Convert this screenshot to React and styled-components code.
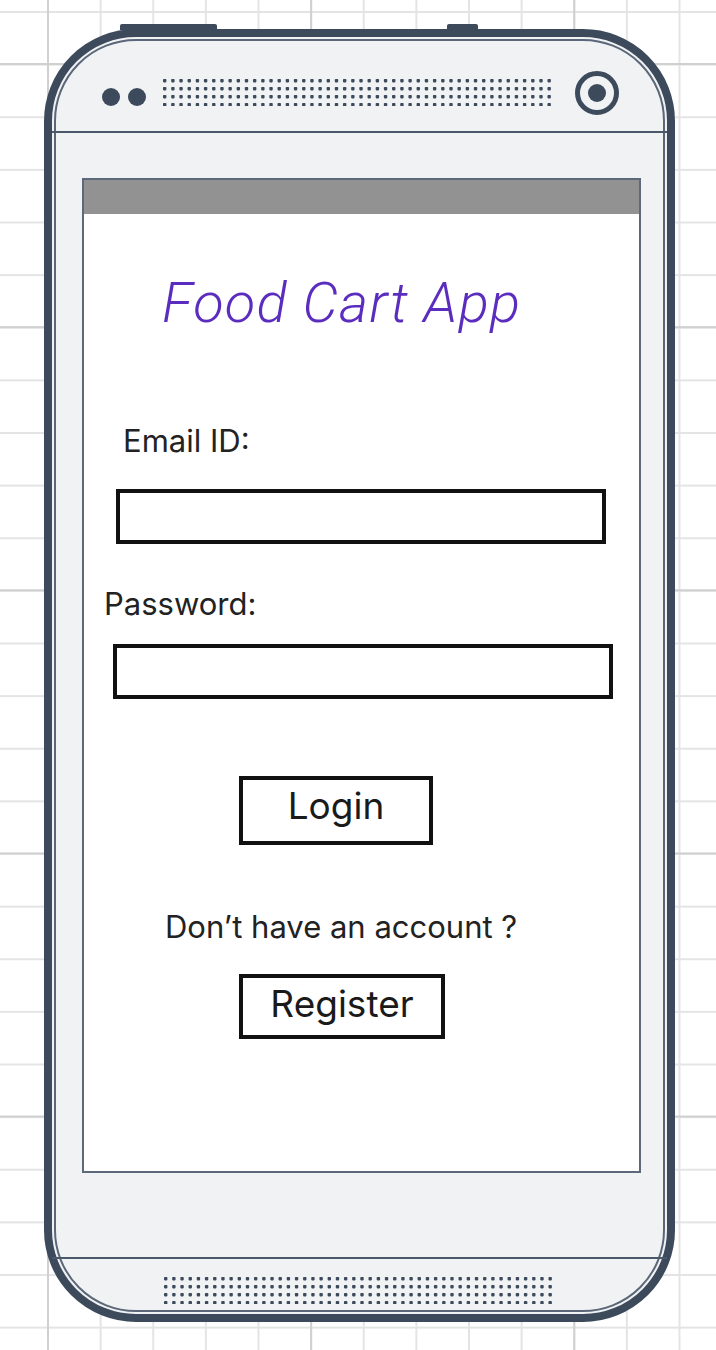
import styled, { createGlobalStyle } from "styled-components";

const INK = "#3d4a5c";

const GlobalStyle = createGlobalStyle`
  html, body {
    margin: 0;
    padding: 0;
    background: #fff;
  }
  body {
    font-family: Inter, "Liberation Sans", sans-serif;
  }
`;

const Canvas = styled.div`
  width: 716px;
  height: 1350px;
  box-sizing: border-box;
  padding: 29px 0 0 44px;
  overflow: hidden;
  background-color: #fff;
  background-image: linear-gradient(to right, #d0d0d0 2px, transparent 2px),
    linear-gradient(to bottom, #d0d0d0 2px, transparent 2px),
    linear-gradient(to right, #e4e4e4 2px, transparent 2px),
    linear-gradient(to bottom, #e4e4e4 2px, transparent 2px);
  background-size: 263.15px 263.15px, 263.15px 263.15px, 52.63px 52.63px,
    52.63px 52.63px;
  background-position: 47px 63px, 47px 63px, 47px 11px, 47px 11px;
`;

const Phone = styled.div`
  position: relative;
  width: 631px;
  height: 1293px;
  box-sizing: border-box;
  border: 8px solid ${INK};
  border-radius: 92px;
  padding: 2px;
  background: #f0f2f4;
`;

const SideKey = styled.span`
  position: absolute;
  top: -13px;
  left: ${(props) => props.$left}px;
  width: ${(props) => props.$width}px;
  height: 6px;
  background: ${INK};
  border-radius: 2px 2px 0 0;
`;

const Shell = styled.div`
  height: 100%;
  box-sizing: border-box;
  border: 2px solid #5b6779;
  border-radius: 82px;
  display: flex;
  flex-direction: column;
`;

const TopBezel = styled.div`
  height: 90px;
  flex-shrink: 0;
  padding-left: 46px;
  display: flex;
  align-items: flex-start;
`;

const BottomBezel = styled.div`
  height: 51px;
  flex-shrink: 0;
  padding: 18px 0 0 108px;
  box-sizing: border-box;
`;

const Divider = styled.div`
  height: 2px;
  flex-shrink: 0;
  margin: 0 -4px;
  background: #4b586a;
`;

const Sensors = styled.div`
  display: flex;
  gap: 8px;
  margin-top: 47px;
`;

const Sensor = styled.span`
  width: 18px;
  height: 18px;
  border-radius: 50%;
  background: ${INK};
`;

const GrilleWrap = styled.div`
  margin-top: ${(props) => props.$top || 0}px;
  margin-left: ${(props) => props.$left || 0}px;
  line-height: 0;
`;

const CameraWrap = styled.div`
  margin: 30px 0 0 24px;
  line-height: 0;
`;

const Middle = styled.div`
  flex: 1;
  padding: 45px 0 0 26px;
`;

const Screen = styled.div`
  width: 559px;
  height: 995px;
  box-sizing: border-box;
  border: 2px solid #5d687a;
  background: #fff;
  display: flex;
  flex-direction: column;
`;

const StatusBar = styled.div`
  height: 34px;
  flex-shrink: 0;
  background: #929292;
`;

const Title = styled.h1`
  margin: 61px 0 0 78px;
  font-family: Roboto, "Liberation Sans", sans-serif;
  font-style: italic;
  font-weight: 300;
  font-size: 56px;
  letter-spacing: 1.2px;
  line-height: 1;
  color: #5b2dbf;
`;

const Label = styled.div`
  margin: ${(props) => props.$top}px 0 0 ${(props) => props.$left}px;
  font-size: 31px;
  line-height: 1;
  color: #222;
`;

const Field = styled.input`
  display: block;
  width: ${(props) => props.$width}px;
  height: 55px;
  margin: ${(props) => props.$top}px 0 0 ${(props) => props.$left}px;
  box-sizing: border-box;
  padding: 0 10px;
  border: 4px solid #111;
  background: #fff;
  font: inherit;
  outline: none;
`;

const Button = styled.button`
  display: flex;
  align-items: center;
  justify-content: center;
  width: ${(props) => props.$width}px;
  height: ${(props) => props.$height}px;
  margin: ${(props) => props.$top}px 0 0 155px;
  box-sizing: border-box;
  padding: 0 0 ${(props) => props.$lift}px;
  border: 4px solid #111;
  background: #fff;
  color: #1a1a1a;
  font-family: Inter, "Liberation Sans", sans-serif;
  font-size: 37px;
  line-height: 1;
  cursor: pointer;
`;

const Grille = ({ cols = 48, rows = 4 }) => {
  const step = 8.18;
  const dots = [];
  for (let r = 0; r < rows; r++) {
    for (let c = 0; c < cols; c++) {
      dots.push(
        <rect
          key={`${r}-${c}`}
          x={c * step}
          y={r * 8}
          width="3.4"
          height="3.4"
          rx="0.8"
          fill={INK}
        />
      );
    }
  }
  return (
    <svg width={(cols - 1) * step + 3.4} height={(rows - 1) * 8 + 3.4}>
      {dots}
    </svg>
  );
};

const Camera = () => (
  <svg width="44" height="44" viewBox="0 0 44 44">
    <circle cx="22" cy="22" r="19.5" fill="none" stroke={INK} strokeWidth="5" />
    <circle cx="22" cy="22" r="9" fill={INK} />
  </svg>
);

const App = () => {
  return (
    <Canvas>
      <GlobalStyle />
      <Phone>
        <SideKey $left={68} $width={97} />
        <SideKey $left={395} $width={31} />
        <Shell>
          <TopBezel>
            <Sensors>
              <Sensor />
              <Sensor />
            </Sensors>
            <GrilleWrap $top={38} $left={17}>
              <Grille />
            </GrilleWrap>
            <CameraWrap>
              <Camera />
            </CameraWrap>
          </TopBezel>
          <Divider />
          <Middle>
            <Screen>
              <StatusBar />
              <Title>Food Cart App</Title>
              <Label $top={94} $left={39}>Email ID:</Label>
              <Field $top={33} $left={32} $width={490} />
              <Label $top={44} $left={20}>Password:</Label>
              <Field type="password" $top={25} $left={29} $width={500} />
              <Button $top={77} $width={194} $height={69} $lift={10}>
                Login
              </Button>
              <Label $top={66} $left={81}>Don’t have an account ?</Label>
              <Button $top={32} $width={206} $height={65} $lift={6}>
                Register
              </Button>
            </Screen>
          </Middle>
          <Divider />
          <BottomBezel>
            <Grille />
          </BottomBezel>
        </Shell>
      </Phone>
    </Canvas>
  );
};

export default App;
